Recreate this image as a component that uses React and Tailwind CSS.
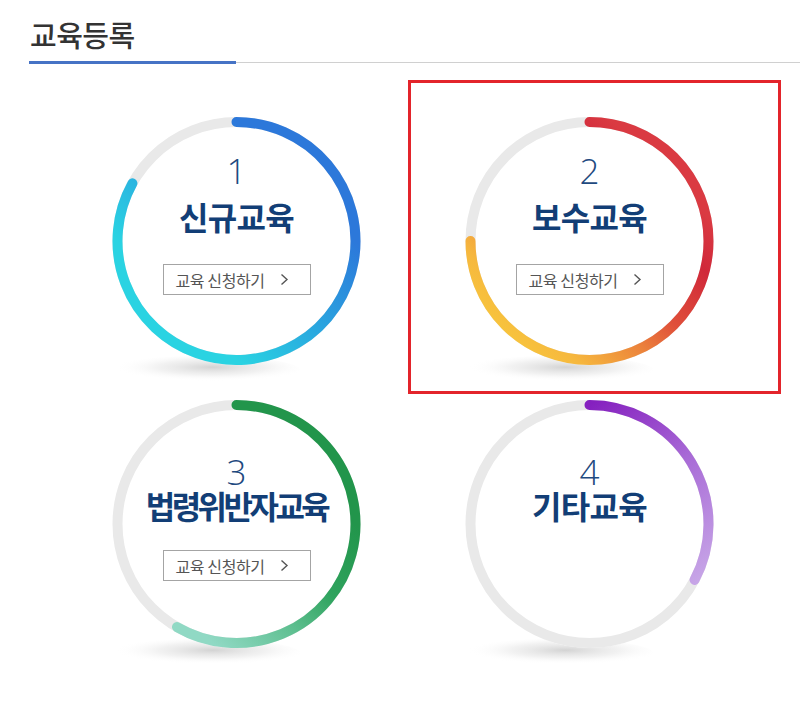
const CX = 176.5;
const CY = 130;
const R = 119;

const items = [
  {
    id: "c1",
    num: "1",
    title: "신규교육",
    sweep: 299,
    grad: { x1: CX + R, y1: CY - R, x2: CX - R, y2: CY + R },
    stops: [
      [0.25, "#2c78da"],
      [0.5, "#2aa4df"],
      [0.75, "#2ad3e2"],
    ],
    button: true,
    compact: false,
  },
  {
    id: "c2",
    num: "2",
    title: "보수교육",
    sweep: 270,
    grad: { x1: CX + R, y1: CY - R, x2: CX - R, y2: CY + R },
    stops: [
      [0.2, "#da3a42"],
      [0.32, "#d0283a"],
      [0.5, "#e0503a"],
      [0.62, "#ec843b"],
      [0.78, "#f6b83e"],
      [0.9, "#f8c73c"],
    ],
    button: true,
    compact: false,
    active: true,
  },
  {
    id: "c3",
    num: "3",
    title: "법령위반자교육",
    sweep: 210,
    grad: { x1: CX + R, y1: CY - R, x2: CX - R, y2: CY + R },
    stops: [
      [0.25, "#22954b"],
      [0.45, "#2fa35e"],
      [0.6, "#5ebf90"],
      [0.8, "#90d9c4"],
    ],
    button: true,
    compact: true,
    tight: true,
  },
  {
    id: "c4",
    num: "4",
    title: "기타교육",
    sweep: 118,
    grad: { x1: CX, y1: CY - R, x2: CX + R, y2: CY + R * 0.5 },
    stops: [
      [0, "#8520bf"],
      [0.45, "#a86ad6"],
      [1, "#c9a9e8"],
    ],
    button: false,
    compact: true,
  },
];

function arc(deg) {
  const a = (deg * Math.PI) / 180;
  const x = CX + R * Math.sin(a);
  const y = CY - R * Math.cos(a);
  return `M ${CX} ${CY - R} A ${R} ${R} 0 ${deg > 180 ? 1 : 0} 1 ${x} ${y}`;
}

function Ring({ item }) {
  return (
    <svg width="353" height="283" className="col-start-1 row-start-1">
      <defs>
        <linearGradient
          id={`g-${item.id}`}
          gradientUnits="userSpaceOnUse"
          x1={item.grad.x1}
          y1={item.grad.y1}
          x2={item.grad.x2}
          y2={item.grad.y2}
        >
          {item.stops.map(([o, c]) => (
            <stop key={o} offset={o} stopColor={c} />
          ))}
        </linearGradient>
        <radialGradient id={`s-${item.id}`} cx="0.55" cy="0.4" r="0.5">
          <stop offset="0" stopColor="#c8c8c8" stopOpacity="0.8" />
          <stop offset="0.55" stopColor="#dedede" stopOpacity="0.4" />
          <stop offset="1" stopColor="#ffffff" stopOpacity="0" />
        </radialGradient>
      </defs>
      <ellipse cx={CX - 34} cy={CY + 129} rx="98" ry="14" fill={`url(#s-${item.id})`} />
      <circle cx={CX} cy={CY} r={R + 5} fill="#ffffff" />
      <circle cx={CX} cy={CY} r={R} fill="none" stroke="#e9e9e9" strokeWidth="10" />
      <path
        d={arc(item.sweep)}
        fill="none"
        stroke={`url(#g-${item.id})`}
        strokeWidth="10"
        strokeLinecap="round"
      />
    </svg>
  );
}

function Circle({ item }) {
  return (
    <div className="relative grid w-[353px] h-[283px]">
      <Ring item={item} />
      <div
        className={
          "col-start-1 row-start-1 flex flex-col items-center " +
          (item.compact ? "pt-[64px]" : "pt-[46px]")
        }
      >
        <div className="font-['Open_Sans'] font-light text-[35px] leading-[28px] text-[#1f4a80]">
          {item.num}
        </div>
        <div
          className={
            "font-bold text-[32px] leading-[32px] text-[#123e76] " +
            (item.tight ? "tracking-[-3.5px] " : "tracking-[-0.75px] ") +
            (item.compact ? "mt-[3px]" : "mt-[15px]")
          }
        >
          {item.title}
        </div>
        {item.button && (
          <button
            className={
              "w-[148px] h-[31px] border border-[#a4a4a4] bg-white flex items-center pl-[12px] text-[16px] leading-[20px] text-[#555555] tracking-[-0.4px] " +
              (item.compact ? "mt-[29px]" : "mt-[32px]")
            }
          >
            <span>교육 신청하기</span>
            <svg width="9" height="13" viewBox="0 0 9 13" className="ml-[15px]">
              <path d="M1.5 1.5 L7 6.5 L1.5 11.5" fill="none" stroke="#555555" strokeWidth="1.4" />
            </svg>
          </button>
        )}
      </div>
      {item.active && (
        <div className="absolute left-[-5px] top-[-31px] w-[373px] h-[314px] border-[3px] border-[#e3242b] pointer-events-none" />
      )}
    </div>
  );
}

export default function App() {
  return (
    <div className="w-[800px] h-[706px] bg-white font-['Noto_Sans_CJK_KR',sans-serif] overflow-hidden">
      <div className="pt-[16px] pl-[29px]">
        <h1 className="text-[29px] leading-[36px] font-medium text-[#333333] tracking-[-0.5px] pl-[1px]">
          교육등록
        </h1>
        <div className="flex items-center mt-[9px]">
          <div className="w-[207px] h-[3px] bg-[#4673c5]" />
          <div className="flex-1 h-px bg-[#d0d0d0]" />
        </div>
      </div>
      <div className="grid grid-cols-[353px_353px] ml-[60px] mt-[47px]">
        {items.map((item) => (
          <Circle key={item.id} item={item} />
        ))}
      </div>
    </div>
  );
}
